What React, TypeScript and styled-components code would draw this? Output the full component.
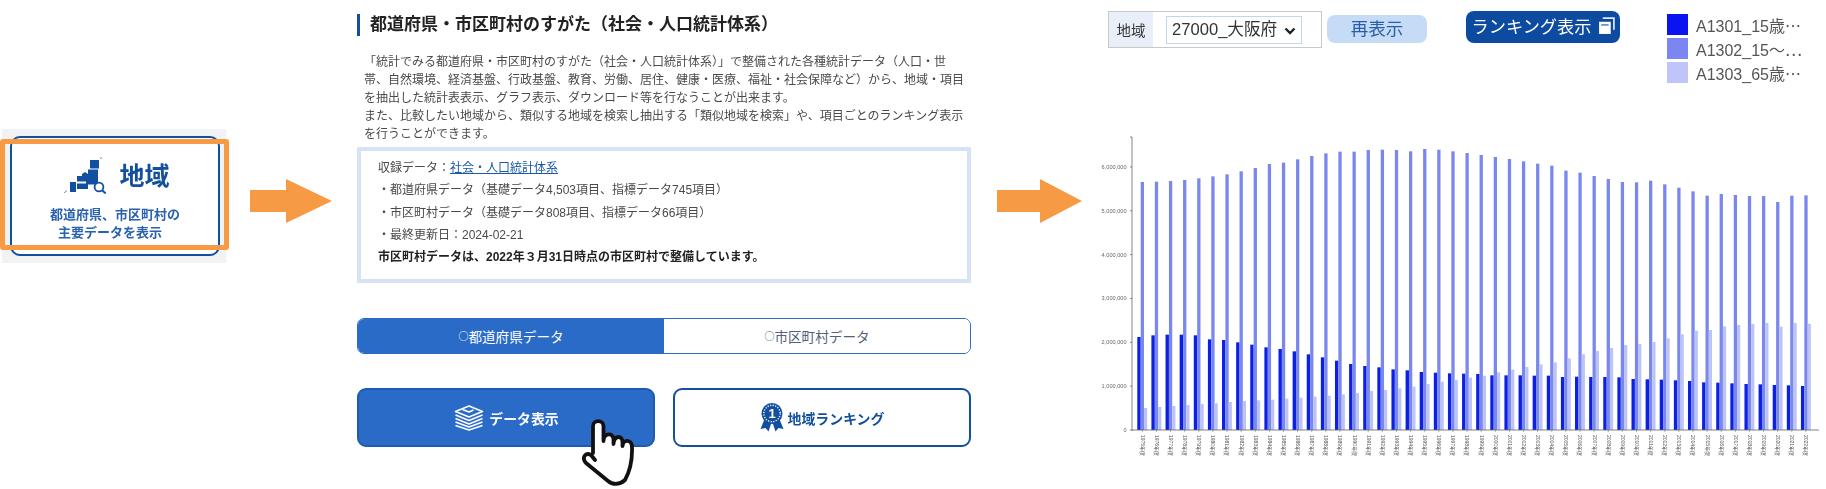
import React from "react"
import styled, { createGlobalStyle } from "styled-components"

const blueValues = [621, 616, 614, 614, 616, 628, 630, 637, 644, 652, 657, 664, 673, 682, 692, 702, 708, 712, 718, 721, 726, 728, 730, 731, 732, 736, 736, 736, 737, 737, 741, 740, 741, 741, 742, 747, 748, 749, 751, 753, 757, 758, 760, 762, 763, 765, 766, 768]
const midValues = [156, 155, 153, 150, 145, 139, 133, 124, 114, 102, 98, 88, 78, 70, 65, 65, 60, 59, 60, 64, 57, 59, 64, 69, 75, 81, 87, 94, 101, 107, 122, 128, 138, 147, 156, 157, 152, 163, 173, 184, 197, 192, 195, 198, 198, 216, 197, 196]
const lightValues = [834, 831, 828, 825, 822, 820, 816, 813, 811, 809, 806, 803, 800, 797, 793, 789, 783, 780, 775, 770, 762, 755, 750, 743, 737, 727, 719, 711, 703, 697, 685, 673, 663, 654, 645, 642, 636, 625, 613, 602, 600, 589, 585, 582, 579, 590, 579, 581]

const BASE_Y = 300
const AXIS_X = 42
const PITCH = 14.12
const MILLION = 43.85

const barHeight = (v: number) => (900 - v) / 3

const legendItems = [
  { color: "#0a14f0", label: "A1301_15歳⋯" },
  { color: "#7b86f2", label: "A1302_15～⋯" },
  { color: "#bfc4fa", label: "A1303_65歳⋯" },
]

const Chart: React.FC = () => (
  <ChartSvg width={736} height={359} viewBox="0 0 736 359">
    {blueValues.map((v, i) => {
      const x = 47.3 + i * PITCH
      return (
        <g key={i}>
          <rect x={x} y={BASE_Y - barHeight(v)} width={3.4} height={barHeight(v)} fill="#0a20e4" />
          <rect x={x + 3.4} y={BASE_Y - barHeight(midValues[i])} width={3.3} height={barHeight(midValues[i])} fill="#7a88ee" />
          <rect x={x + 6.7} y={BASE_Y - barHeight(lightValues[i])} width={3.2} height={barHeight(lightValues[i])} fill="#bcc4f7" />
          <line x1={x + 5} x2={x + 5} y1={BASE_Y} y2={BASE_Y + 2} stroke="#777" strokeWidth={0.6} />
          <AxisText x={x + 3.4} y={305} transform={`rotate(90 ${x + 3.4} 305)`}>
            {1975 + i}年度
          </AxisText>
        </g>
      )
    })}
    <line x1={AXIS_X} x2={AXIS_X} y1={7} y2={BASE_Y + 1} stroke="#666" strokeWidth={0.8} />
    <line x1={AXIS_X - 2} x2={AXIS_X} y1={7} y2={7} stroke="#666" strokeWidth={0.8} />
    <line x1={AXIS_X} x2={729} y1={BASE_Y} y2={BASE_Y} stroke="#666" strokeWidth={0.8} />
    {[0, 1, 2, 3, 4, 5, 6].map((n) => (
      <g key={n}>
        <line x1={AXIS_X - 2} x2={AXIS_X} y1={BASE_Y - n * MILLION} y2={BASE_Y - n * MILLION} stroke="#666" strokeWidth={0.8} />
        <ValueText x={36.5} y={BASE_Y - n * MILLION + 2} textAnchor="end">
          {n === 0 ? "0" : `${n},000,000`}
        </ValueText>
      </g>
    ))}
  </ChartSvg>
)

const RegionIcon = () => (
  <svg width={44} height={37} viewBox="0 0 44 37">
    <rect x={27} y={3} width={9} height={8.5} fill="#124f9e" />
    <rect x={25} y={12.5} width={10} height={15} fill="#124f9e" />
    <path d="M14 19 L19 19 L19 17 L22 15 L25 17 L25 32 L14 32 Z" fill="#124f9e" />
    <rect x={14} y={24.5} width={9} height={2} fill="#fff" />
    <rect x={7} y={25} width={6} height={10} fill="#124f9e" />
    <circle cx={36} cy={30} r={4.4} fill="#fff" stroke="#124f9e" strokeWidth={1.8} />
    <line x1={39.4} y1={33.4} x2={42.6} y2={36.4} stroke="#124f9e" strokeWidth={2} />
    <line x1={37} y1={1.6} x2={39} y2={0.6} stroke="#6a8cc0" strokeWidth={1} />
    <line x1={1} y1={35.8} x2={4} y2={33.6} stroke="#6a8cc0" strokeWidth={1} />
  </svg>
)

const StackIcon = () => (
  <svg width={32} height={26} viewBox="0 0 31 26" fill="none" stroke="#fff" strokeWidth={1.6} strokeLinejoin="round">
    <path d="M15.5 1 L29 6.5 L15.5 12 L2 6.5 Z" />
    <path d="M9 4.5 L15.5 7 L20 5" />
    <path d="M2 10 L15.5 15.5 L29 10" />
    <path d="M2 13.5 L15.5 19 L29 13.5" />
    <path d="M2 17 L15.5 22 L29 17" />
    <path d="M2 20.5 L15.5 25 L29 20.5" />
  </svg>
)

const MedalIcon = () => (
  <svg width={24} height={29} viewBox="0 0 24 29">
    <path d="M5 15 L0.5 26 L5.5 25 L8.5 28.5 L12 18 L15.5 28.5 L18.5 25 L23.5 26 L19 15 Z" fill="#124f9e" />
    <circle cx={12} cy={10.5} r={10.5} fill="#124f9e" />
    <circle cx={12} cy={10.5} r={8.2} fill="none" stroke="#fff" strokeWidth={1.4} strokeDasharray="1.2 1.4" />
    <MedalDigit x={12} y={15} textAnchor="middle">1</MedalDigit>
  </svg>
)

const PointerHand = () => (
  <HandSvg width={52} height={67} viewBox="0 0 52 67">
    <path
      d="M11 34 L11 7 C11 0.5 21.5 0.5 21.5 7 L21.5 22 C21.5 14 31 13 31.5 20 L31.5 25 C32 16 40.5 16 40.5 23 L40.5 27 C41 20 50 20 50 28 C50.5 42 48 52 43 61 C37 66.5 30 65.5 26 62 L4 44 C-0.5 39 3 33 9 36 L13 41"
      fill="#fff"
      stroke="#111"
      strokeWidth={3.8}
      strokeLinecap="round"
      strokeLinejoin="round"
    />
  </HandSvg>
)

const WindowIcon = () => (
  <svg width={17} height={18} viewBox="0 0 16 17">
    <path d="M4.5 1 H15 V12" fill="none" stroke="#dfe8f5" strokeWidth={1.6} />
    <rect x={1} y={4.5} width={11} height={11.5} fill="#fff" />
    <rect x={3} y={7} width={7} height={1} fill="#0d4ba0" />
  </svg>
)

const App: React.FC = () => (
  <Page>
    <GlobalStyle />
    <LeftColumn>
      <FeatureCard>
        <FeatureInner>
          <FeatureHead>
            <RegionIcon />
            <FeatureTitle>地域</FeatureTitle>
          </FeatureHead>
          <FeatureText>
            <FeatureLine>都道府県、市区町村の</FeatureLine>
            <FeatureLine $shift={10}>主要データを表示</FeatureLine>
          </FeatureText>
        </FeatureInner>
        <OrangeFrame />
      </FeatureCard>
    </LeftColumn>

    <Arrow $left={21} $width={82} viewBox="0 0 82 44">
      <path d="M0 11 H36 V0 L82 22 L36 44 V33 H0 Z" fill="#f79a44" />
    </Arrow>

    <MiddleColumn>
      <Heading>都道府県・市区町村のすがた（社会・人口統計体系）</Heading>
      <Intro>
        「統計でみる都道府県・市区町村のすがた（社会・人口統計体系）」で整備された各種統計データ（人口・世
        <br />
        帯、自然環境、経済基盤、行政基盤、教育、労働、居住、健康・医療、福祉・社会保障など）から、地域・項目
        <br />
        を抽出した統計表表示、グラフ表示、ダウンロード等を行なうことが出来ます。
        <br />
        また、比較したい地域から、類似する地域を検索し抽出する「類似地域を検索」や、項目ごとのランキング表示
        <br />
        を行うことができます。
      </Intro>
      <InfoBox>
        <InfoLine>
          収録データ：<InfoLink href="#">社会・人口統計体系</InfoLink>
        </InfoLine>
        <InfoLine>・都道府県データ（基礎データ4,503項目、指標データ745項目）</InfoLine>
        <InfoLine>・市区町村データ（基礎データ808項目、指標データ66項目）</InfoLine>
        <InfoLine>・最終更新日：2024-02-21</InfoLine>
        <InfoLine $bold>市区町村データは、2022年３月31日時点の市区町村で整備しています。</InfoLine>
      </InfoBox>
      <Toggle>
        <ToggleOption $active>
          <RadioMark>○</RadioMark>都道府県データ
        </ToggleOption>
        <ToggleOption>
          <RadioMark>○</RadioMark>市区町村データ
        </ToggleOption>
      </Toggle>
      <ActionRow>
        <ActionButton $primary>
          <StackIcon />
          データ表示
          <PointerHand />
        </ActionButton>
        <ActionButton>
          <MedalIcon />
          地域ランキング
        </ActionButton>
      </ActionRow>
    </MiddleColumn>

    <Arrow $left={26} $width={85} viewBox="0 0 85 44">
      <path d="M0 11 H43 V0 L85 22 L43 44 V33 H0 Z" fill="#f79a44" />
    </Arrow>

    <RightColumn>
      <Toolbar>
        <SelectPanel>
          <SelectLabel>地域</SelectLabel>
          <SelectCell>
            <RegionSelect defaultValue="27000">
              <option value="27000">27000_大阪府</option>
            </RegionSelect>
            <SelectChevron width={12} height={8} viewBox="0 0 12 8">
              <path d="M1.5 1.5 L6 6 L10.5 1.5" fill="none" stroke="#222" strokeWidth={2.4} />
            </SelectChevron>
          </SelectCell>
        </SelectPanel>
        <RefreshButton>再表示</RefreshButton>
        <RankingButton>
          ランキング表示
          <WindowIcon />
        </RankingButton>
        <Legend>
          {legendItems.map((item) => (
            <LegendRow key={item.label}>
              <LegendSwatch $color={item.color} />
              {item.label}
            </LegendRow>
          ))}
        </Legend>
      </Toolbar>
      <Chart />
    </RightColumn>
  </Page>
)

const GlobalStyle = createGlobalStyle`
  body {
    margin: 0;
    background: #fff;
    font-family: "Liberation Sans", "Noto Sans CJK JP", sans-serif;
  }
`

const Page = styled.div`
  display: flex;
  align-items: flex-start;
  width: 1826px;
  height: 489px;
  overflow: hidden;
  filter: blur(0.35px);
`

const LeftColumn = styled.div`
  width: 229px;
  flex: none;
  padding-top: 129px;
`

const FeatureCard = styled.div`
  position: relative;
  box-sizing: border-box;
  width: 224px;
  height: 134px;
  margin-left: 2px;
  padding: 7px 6px 7px 8px;
  background: #f0f2f4;
`

const FeatureInner = styled.div`
  box-sizing: border-box;
  height: 120px;
  background: #fff;
  border: 2px solid #124f9e;
  border-radius: 10px;
  display: flex;
  flex-direction: column;
  align-items: center;
  padding-top: 19px;
`

const FeatureHead = styled.div`
  display: flex;
  align-items: center;
  gap: 12px;
  margin-left: 3px;
`

const FeatureTitle = styled.div`
  font-size: 25px;
  font-weight: 700;
  line-height: 30px;
  color: #124f9e;
`

const FeatureText = styled.div`
  margin-top: 12px;
  font-size: 13px;
  font-weight: 700;
  line-height: 18px;
  text-align: center;
  color: #2a62ad;
`

const FeatureLine = styled.div<{ $shift?: number }>`
  padding-right: ${(p) => p.$shift ?? 0}px;
`

const OrangeFrame = styled.div`
  position: absolute;
  left: -2px;
  top: 10px;
  width: 229px;
  height: 111px;
  box-sizing: border-box;
  border: 5px solid #f79a44;
  border-radius: 3px;
`

const Arrow = styled.svg<{ $left: number; $width: number }>`
  flex: none;
  width: ${(p) => p.$width}px;
  height: 44px;
  margin-left: ${(p) => p.$left}px;
  margin-top: 179px;
`

const MiddleColumn = styled.div`
  flex: none;
  width: 614px;
  margin-left: 25px;
  padding-top: 14px;
`

const Heading = styled.h2`
  margin: 0;
  height: 22px;
  padding-left: 10px;
  border-left: 3px solid #124f9e;
  font-size: 17px;
  font-weight: 700;
  line-height: 22px;
  color: #222;
`

const Intro = styled.p`
  margin: 17px 0 4px;
  padding-left: 7px;
  font-size: 12px;
  line-height: 18px;
  white-space: nowrap;
  color: #4a4a4a;
`

const InfoBox = styled.div`
  box-sizing: border-box;
  height: 136px;
  padding: 6px 17px;
  border: 4px solid #d6e3f5;
`

const InfoLine = styled.div<{ $bold?: boolean }>`
  font-size: 12px;
  line-height: 22.3px;
  font-weight: ${(p) => (p.$bold ? 700 : 400)};
  color: ${(p) => (p.$bold ? "#222" : "#4a4a4a")};
`

const InfoLink = styled.a`
  color: #1a5aa8;
  text-decoration: underline;
`

const Toggle = styled.div`
  display: grid;
  grid-template-columns: 306px 306px;
  height: 36px;
  margin-top: 35px;
  box-sizing: border-box;
  border: 1px solid #2a6bc8;
  border-radius: 7px;
  overflow: hidden;
`

const ToggleOption = styled.div<{ $active?: boolean }>`
  display: flex;
  align-items: center;
  justify-content: center;
  font-size: 13.6px;
  background: ${(p) => (p.$active ? "#2a6bc8" : "#fff")};
  color: ${(p) => (p.$active ? "#fff" : "#555f7a")};
`

const RadioMark = styled.span`
  font-family: "Noto Sans CJK JP", sans-serif;
  font-size: 10px;
  line-height: 1;
`

const ActionRow = styled.div`
  display: grid;
  grid-template-columns: 298px 298px;
  gap: 18px;
  margin-top: 34px;
`

const ActionButton = styled.div<{ $primary?: boolean }>`
  position: relative;
  box-sizing: border-box;
  height: 59px;
  display: flex;
  align-items: center;
  justify-content: center;
  gap: 4px;
  font-size: 13.9px;
  font-weight: 700;
  border: 2px solid ${(p) => (p.$primary ? "#1c5cb0" : "#124f9e")};
  border-radius: 9px;
  background: ${(p) => (p.$primary ? "#2a6bc8" : "#fff")};
  color: ${(p) => (p.$primary ? "#fff" : "#124f9e")};
`

const HandSvg = styled.svg`
  position: absolute;
  left: 223px;
  top: 29px;
`

const RightColumn = styled.div`
  flex: none;
  width: 736px;
  margin-left: 8px;
`

const Toolbar = styled.div`
  display: flex;
  align-items: flex-start;
  height: 82px;
  padding: 11px 0 0 18px;
  box-sizing: border-box;
  margin-bottom: 48px;
`

const SelectPanel = styled.div`
  display: flex;
  box-sizing: border-box;
  width: 214px;
  height: 37px;
  border: 1px solid #c9c9c9;
  background: #fff;
`

const SelectLabel = styled.div`
  width: 44px;
  display: flex;
  align-items: center;
  justify-content: center;
  background: #e9eff8;
  font-size: 14.5px;
  color: #333;
`

const SelectCell = styled.div`
  position: relative;
  flex: 1;
  display: flex;
  align-items: center;
  padding-left: 13px;
`

const RegionSelect = styled.select`
  appearance: none;
  width: 136px;
  height: 28px;
  box-sizing: border-box;
  padding: 0 0 0 5px;
  border: 1px solid #c5d6ec;
  border-radius: 0;
  background: #fff;
  font-family: inherit;
  font-size: 16.6px;
  color: #333;
`

const SelectChevron = styled.svg`
  position: absolute;
  left: 131px;
  top: 15px;
`

const RefreshButton = styled.div`
  box-sizing: border-box;
  width: 100px;
  height: 28px;
  margin: 4px 0 0 5px;
  padding-bottom: 3px;
  display: flex;
  align-items: center;
  justify-content: center;
  border-radius: 8px;
  background: #c5dbf6;
  font-size: 17.5px;
  color: #2a5fa8;
`

const RankingButton = styled.div`
  box-sizing: border-box;
  width: 154px;
  height: 32px;
  margin-left: 39px;
  padding: 0 0 3px 1px;
  display: flex;
  align-items: center;
  justify-content: center;
  gap: 7px;
  border-radius: 8px;
  background: #0d4ba0;
  font-size: 17.2px;
  color: #fff;
`

const Legend = styled.div`
  margin: 3px 0 0 47px;
  display: flex;
  flex-direction: column;
  gap: 3px;
`

const LegendRow = styled.div`
  height: 21px;
  display: flex;
  align-items: center;
  gap: 8px;
  font-size: 16px;
  white-space: nowrap;
  color: #555;
`

const LegendSwatch = styled.span<{ $color: string }>`
  width: 21px;
  height: 21px;
  background: ${(p) => p.$color};
`

const ChartSvg = styled.svg`
  display: block;
`

const AxisText = styled.text`
  font-size: 5px;
  fill: #555;
`

const ValueText = styled.text`
  font-size: 5.6px;
  fill: #666;
`

const MedalDigit = styled.text`
  font-size: 13px;
  font-weight: 700;
  fill: #fff;
`

export default App
